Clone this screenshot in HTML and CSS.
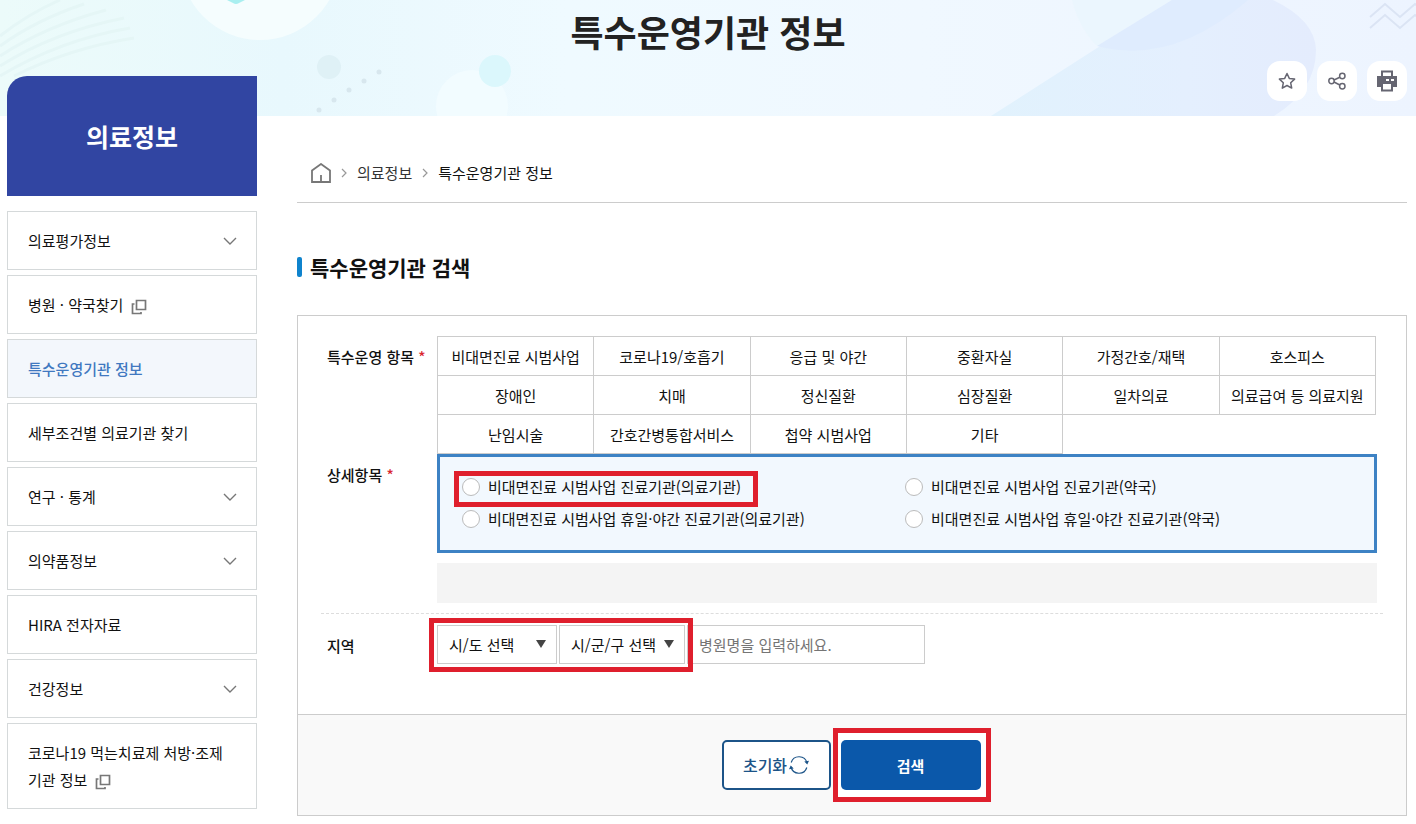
FILE: index.html
```
<!DOCTYPE html>
<html lang="ko">

<head>
    <meta charset="UTF-8">
    <meta name="viewport" content="width=device-width, initial-scale=1.0">
    <title>특수운영기관 정보</title>
    <link rel="stylesheet" href="styles.css">
</head>

<body>
    <!-- shared icons -->
    <svg class="sprite" aria-hidden="true">
        <symbol id="ico-down" viewBox="0 0 14 8">
            <path d="M1 1l6 6 6-6" fill="none" stroke="#777" stroke-width="1.4" />
        </symbol>
        <symbol id="ico-window" viewBox="0 0 16 16">
            <path d="M5.500 1.500h9v9h-9z M3.500 5H1.500v9.500h8.500V13" fill="none" stroke="#777" stroke-width="1.700" />
        </symbol>
        <symbol id="ico-next" viewBox="0 0 6 10">
            <path d="M1 1l4 4-4 4" fill="none" stroke="#999" stroke-width="1.2" />
        </symbol>
    </svg>

    <header class="hero">
        <svg class="hero-bg" viewBox="0 0 1416 116" preserveAspectRatio="xMidYMin slice" aria-hidden="true">
            <defs>
                <linearGradient id="sky" x1="0" x2="1" y1="0" y2="0">
                    <stop offset="0" stop-color="#ecfbfa" />
                    <stop offset=".2" stop-color="#e8f8fd" />
                    <stop offset=".4" stop-color="#effaff" />
                    <stop offset=".65" stop-color="#f0f8ff" />
                    <stop offset="1" stop-color="#edf4ff" />
                </linearGradient>
                <linearGradient id="beam" x1="0" x2="1" y1="0" y2="0">
                    <stop offset="0" stop-color="#e1f2fd" />
                    <stop offset=".6" stop-color="#e4effe" />
                    <stop offset="1" stop-color="#e4ecfd" />
                </linearGradient>
            </defs>
            <rect width="1416" height="116" fill="url(#sky)" />
            <g fill="none" stroke="#e5f6f6" stroke-width="3">
                <path d="M0 36Q28 14 60 0M0 46Q36 20 84 4M0 56Q46 26 106 10M0 66Q54 32 124 18M0 76Q60 40 130 28M14 76Q70 48 134 38" />
            </g>
            <circle cx="260" cy="-40" r="80" fill="#f5fdfe" />
            <path d="M227 0h18l-6 3q-3 2-6 0z" fill="#a9eff0" />
            <circle cx="329" cy="67" r="12" fill="#dff1f6" />
            <g fill="#d8e7ee">
                <circle cx="379" cy="72" r="2.500" />
                <circle cx="364" cy="81" r="2.500" />
                <circle cx="349" cy="90" r="2.500" />
                <circle cx="334" cy="100" r="2.500" />
                <circle cx="319" cy="110" r="2.500" />
            </g>
            <circle cx="472" cy="106" r="36" fill="#f2fcff" />
            <circle cx="495" cy="71" r="16" fill="#dbf7fc" />
            <path d="M991 116L1172 0h101q42 20 43 50 0 40-42 66z" fill="url(#beam)" />
            <path d="M1072 0h100l-75 46q-18-18-25-46z" fill="#ebf6fe" />
            <path d="M1172 0h76q-76 66-151 46z" fill="#dfecfe" />
            <g fill="none" stroke="#dbe4f4" stroke-width="2">
                <path d="M1370 17l15-13 15 13 15-13 4 3M1370 28l15-13 15 13 15-13 4 3" />
            </g>
        </svg>
        <h1 class="hero-title">특수운영기관 정보</h1>
        <div class="tools">
            <button type="button" class="tool" aria-label="즐겨찾기">
                <svg width="20" height="20" viewBox="0 0 20 20">
                    <path d="M10 2.500l2.300 4.900 5.300.7-3.900 3.700 1 5.300L10 14.500l-4.700 2.600 1-5.300L2.400 8.100l5.300-.7z" fill="none" stroke="#666672" stroke-width="1.500" stroke-linejoin="round" />
                </svg>
            </button>
            <button type="button" class="tool" aria-label="공유">
                <svg width="20" height="20" viewBox="0 0 20 20" fill="none" stroke="#666672" stroke-width="1.500">
                    <circle cx="4.500" cy="10" r="2.700" />
                    <circle cx="15.300" cy="5" r="2.700" />
                    <circle cx="15.300" cy="15.300" r="2.700" />
                    <path d="M7 9l5.800-2.800M7 11l5.800 3" />
                </svg>
            </button>
            <button type="button" class="tool" aria-label="인쇄">
                <svg width="22" height="22" viewBox="0 0 22 22">
                    <path d="M1 6h20v11h-4v-3H5v3H1z" fill="#666672" />
                    <path d="M6 6V1.500h10V6M6 14v6.500h10V14" fill="none" stroke="#666672" stroke-width="2" />
                    <path d="M10 9h3v2h-3zM15 9h3v2h-3z" fill="#fff" />
                </svg>
            </button>
        </div>
    </header>

    <div class="container">
        <aside class="side">
            <h2 class="side-title">의료정보</h2>
            <nav>
                <ul class="side-menu">
                    <li><a href="#">의료평가정보 <svg class="down"><use href="#ico-down" /></svg></a></li>
                    <li><a href="#"><span>병원 · 약국찾기 <svg class="window"><use href="#ico-window" /></svg></span></a></li>
                    <li><a href="#" class="on">특수운영기관 정보</a></li>
                    <li><a href="#">세부조건별 의료기관 찾기</a></li>
                    <li><a href="#">연구 · 통계 <svg class="down"><use href="#ico-down" /></svg></a></li>
                    <li><a href="#">의약품정보 <svg class="down"><use href="#ico-down" /></svg></a></li>
                    <li><a href="#">HIRA 전자자료</a></li>
                    <li><a href="#">건강정보 <svg class="down"><use href="#ico-down" /></svg></a></li>
                    <li><a href="#"><span>코로나19 먹는치료제 처방·조제<br>기관 정보 <svg class="window"><use href="#ico-window" /></svg></span></a></li>
                </ul>
            </nav>
        </aside>

        <main class="content">
            <nav class="path">
                <a href="#" aria-label="홈">
                    <svg class="home" viewBox="0 0 20 20">
                        <path d="M1 7.500L10 1l9 6.500V19H1zM10 12v7" fill="none" stroke="#777" stroke-width="1.800" />
                    </svg>
                </a>
                <svg class="next"><use href="#ico-next" /></svg>
                <a href="#">의료정보</a>
                <svg class="next"><use href="#ico-next" /></svg>
                <a href="#" class="now">특수운영기관 정보</a>
            </nav>

            <h3 class="section-title">특수운영기관 검색</h3>

            <form class="search">
                <div class="fields">
                    <div class="row">
                        <div class="label" id="lb-item">특수운영 항목 <em>*</em></div>
                        <ul class="tabs" aria-labelledby="lb-item">
                            <li><button type="button">비대면진료 시범사업</button></li>
                            <li><button type="button">코로나19/호흡기</button></li>
                            <li><button type="button">응급 및 야간</button></li>
                            <li><button type="button">중환자실</button></li>
                            <li><button type="button">가정간호/재택</button></li>
                            <li><button type="button">호스피스</button></li>
                            <li><button type="button">장애인</button></li>
                            <li><button type="button">치매</button></li>
                            <li><button type="button">정신질환</button></li>
                            <li><button type="button">심장질환</button></li>
                            <li><button type="button">일차의료</button></li>
                            <li><button type="button">의료급여 등 의료지원</button></li>
                            <li><button type="button">난임시술</button></li>
                            <li><button type="button">간호간병통합서비스</button></li>
                            <li><button type="button">첩약 시범사업</button></li>
                            <li><button type="button">기타</button></li>
                        </ul>
                    </div>

                    <div class="row">
                        <div class="label" id="lb-detail">상세항목 <em>*</em></div>
                        <div class="detail">
                            <div class="radios" role="radiogroup" aria-labelledby="lb-detail">
                                <label class="mark mark-radio"><input type="radio" name="detail">비대면진료 시범사업 진료기관(의료기관)</label>
                                <label><input type="radio" name="detail">비대면진료 시범사업 진료기관(약국)</label>
                                <label><input type="radio" name="detail">비대면진료 시범사업 휴일·야간 진료기관(의료기관)</label>
                                <label><input type="radio" name="detail">비대면진료 시범사업 휴일·야간 진료기관(약국)</label>
                            </div>
                            <div class="picked"></div>
                        </div>
                    </div>

                    <div class="row row-area">
                        <label class="label" for="sido">지역</label>
                        <div class="area">
                            <div class="selects mark mark-select">
                                <span class="select sido"><select id="sido"><option>시/도 선택</option></select></span>
                                <span class="select gugun"><select aria-label="시/군/구"><option>시/군/구 선택</option></select></span>
                            </div>
                            <input type="text" class="name" placeholder="병원명을 입력하세요." aria-label="병원명">
                        </div>
                    </div>
                </div>

                <div class="buttons">
                    <button type="reset" class="btn btn-reset">초기화
                        <svg width="20" height="20" viewBox="0 0 20 20">
                            <path d="M2.200 7.500A8.200 8.200 0 0 1 18 8M17.800 12.500A8.200 8.200 0 0 1 2 12" fill="none" stroke="#1c5488" stroke-width="1.200" />
                            <path d="M15.300 6.500l3 3 1.700-3.700zM4.700 13.500l-3-3L0 14.200z" fill="#1c5488" />
                        </svg>
                    </button>
                    <span class="mark mark-btn"><button type="submit" class="btn btn-search">검색</button></span>
                </div>
            </form>
        </main>
    </div>
</body>

</html>
```
FILE: styles.css
```
* {
    box-sizing: border-box;
    margin: 0;
    padding: 0;
}

body {
    background-color: #fff;
    color: #111;
    font-family: "Noto Sans CJK KR", "Noto Sans", sans-serif;
    font-size: 15px;
    line-height: 27px;
}

ul {
    list-style: none;
}

a {
    color: inherit;
    text-decoration: none;
}

button,
input,
select {
    font: inherit;
    color: inherit;
}

button {
    cursor: pointer;
}

.sprite {
    display: none;
}

/* top banner */
.hero {
    position: relative;
    padding: 4px 9px 15px;
}

.hero-bg {
    position: absolute;
    top: 0;
    left: 0;
    width: 100%;
    height: 100%;
    z-index: -1;
}

.hero-title {
    margin-bottom: 3px;
    font-size: 36px;
    line-height: 54px;
    font-weight: 700;
    text-align: center;
    color: #222;
}

.tools {
    display: flex;
    justify-content: flex-end;
    gap: 10px;
}

.tool {
    display: flex;
    align-items: center;
    justify-content: center;
    width: 40px;
    height: 40px;
    border: 0;
    border-radius: 13px;
    background-color: #fff;
}

.container {
    display: flex;
    align-items: flex-start;
    gap: 40px;
    padding: 0 9px 8px 7px;
}

/* left menu */
.side {
    position: relative;
    flex: 0 0 250px;
    margin-top: -40px;
}

.side-title {
    padding: 40px 0;
    border-radius: 20px 0 0 0;
    background-color: #3145a2;
    color: #fff;
    font-size: 25px;
    line-height: 40px;
    text-align: center;
}

.side-menu {
    display: flex;
    flex-direction: column;
    gap: 5px;
    margin-top: 15px;
}

.side-menu a {
    display: flex;
    align-items: center;
    justify-content: space-between;
    padding: 15px 19px 15px 20px;
    border: 1px solid #d5d9da;
}

.side-menu .on {
    background-color: #f3f7fc;
    color: #4078c0;
    font-weight: 500;
}

.down {
    width: 14px;
    height: 8px;
}

.window {
    width: 16px;
    height: 16px;
    margin-left: 3px;
    vertical-align: -4px;
}

/* content */
.content {
    flex: 1;
    min-width: 0;
}

.path {
    display: flex;
    align-items: center;
    gap: 10px;
    padding: 43px 14px 16px;
    border-bottom: 1px solid #ccc;
    color: #333;
}

.path .now {
    color: #111;
}

.home {
    display: block;
    width: 20px;
    height: 20px;
}

.next {
    width: 6px;
    height: 10px;
}

.section-title {
    display: flex;
    align-items: center;
    gap: 8px;
    margin: 50px 0 34px;
    font-size: 21px;
    line-height: 28px;
}

.section-title::before {
    content: "";
    width: 5px;
    height: 20px;
    border-radius: 2px;
    background-color: #0f83cd;
}

.search {
    border: 1px solid #ccc;
}

.fields {
    padding: 20px 23px 50px;
}

.row {
    display: flex;
    padding: 0 6px;
}

.label {
    flex: 0 0 110px;
    padding-top: 7px;
    font-weight: 500;
}

.label em {
    color: #d9262f;
    font-style: normal;
}

.tabs {
    flex: 1;
    display: grid;
    grid-template-columns: repeat(6, 1fr);
    padding: 0 2px 1px 0;
}

.tabs li {
    height: 39px;
}

/* neighbours share one border line */
.tabs button {
    width: calc(100% + 1px);
    height: 40px;
    border: 1px solid #ccc;
    background-color: #fff;
    white-space: nowrap;
}

.detail {
    flex: 1;
}

.radios {
    display: grid;
    grid-template-columns: 1fr 1fr;
    padding: 14px 26px 15px 22px;
    border: 3px solid #3d82c4;
    background-color: #f2f8fe;
}

.radios label {
    display: flex;
    align-items: center;
    justify-self: start;
    gap: 8px;
    line-height: 32px;
}

.radios input {
    appearance: none;
    width: 18px;
    height: 18px;
    border: 1px solid #bbb;
    border-radius: 50%;
    background-color: #fff;
}

.radios input:checked {
    border: 5px solid #3d82c4;
}

.picked {
    height: 40px;
    margin: 10px 0;
    background-color: #f4f4f4;
}

.row-area {
    padding-top: 11px;
    border-top: 1px dashed #ddd;
}

.area {
    display: flex;
    gap: 2px;
}

.selects {
    display: flex;
    gap: 2px;
}

.select {
    position: relative;
}

.select::after {
    content: "";
    position: absolute;
    top: 15px;
    right: 11px;
    border: 5px solid transparent;
    border-top: 8px solid #444;
    border-bottom: 0;
    pointer-events: none;
}

.select select {
    appearance: none;
    width: 100%;
    height: 39px;
    padding: 0 11px;
    border: 1px solid #ccc;
    border-radius: 0;
    background-color: #fff;
}

.sido {
    width: 120px;
}

.gugun {
    width: 126px;
}

.name {
    width: 238px;
    height: 39px;
    padding: 0 11px;
    border: 1px solid #ccc;
}

.name::placeholder {
    color: #757575;
}

.buttons {
    display: flex;
    justify-content: center;
    gap: 10px;
    padding: 25px 2px 25px 0;
    border-top: 1px solid #ccc;
    background-color: #f9f9f9;
}

.btn {
    display: flex;
    align-items: center;
    justify-content: center;
    height: 50px;
    border-radius: 5px;
}

.btn-reset {
    width: 109px;
    gap: 2px;
    border: 2px solid #1c5488;
    background-color: #fff;
    color: #1c5488;
    font-size: 16px;
    font-weight: 500;
}

.btn-search {
    position: relative;
    z-index: 2;
    width: 140px;
    border: 0;
    background-color: #0b58aa;
    color: #fff;
    font-weight: 700;
}

/* red guide frames */
.mark {
    position: relative;
}

.mark::before {
    content: "";
    position: absolute;
    border: 5px solid #df1f2d;
    pointer-events: none;
    z-index: 1;
}

.mark-radio::before {
    inset: 0 -17px -4px -8px;
}

.mark-select::before {
    inset: -7px -8px -8px;
}

.mark-btn::before {
    inset: -12px -10px -12px -8px;
    background-color: #fff;
}
```
